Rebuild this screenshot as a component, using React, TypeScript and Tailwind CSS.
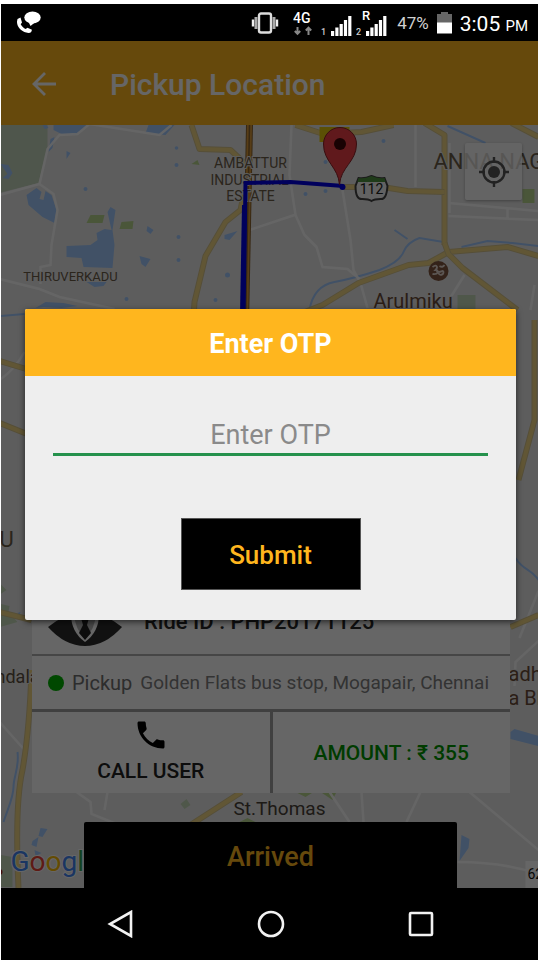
import { useState } from 'react';
import type { ReactNode } from 'react';

const ROBOTO = 'font-[Roboto,sans-serif]';

function Signal({ slot, roaming }: { slot: string; roaming?: boolean }) {
  return (
    <svg width="31" height="28" viewBox="0 0 31 28" fill="#fff" aria-hidden="true">
      <text x="0" y="26" fontSize="9" fontWeight="500" fill="#ccc">{slot}</text>
      {roaming && <text x="6" y="11" fontSize="13" fontWeight="500">R</text>}
      <rect x="10" y="22" width="3.2" height="5" />
      <rect x="14.3" y="18.500" width="3.2" height="8.500" />
      <rect x="18.600" y="15" width="3.2" height="12" />
      <rect x="22.900" y="11" width="3.2" height="16" />
      <rect x="27.200" y="7" width="3.2" height="20" />
    </svg>
  );
}

function StatusBar() {
  return (
    <header className="flex h-[37px] items-center bg-black pl-4 pr-2.5 text-white">
      <svg width="26" height="25" viewBox="0 0 26 25" fill="#fff" aria-hidden="true">
        <ellipse cx="15.500" cy="7.500" rx="8.200" ry="6" />
        <path d="M11 11l2.500 5 5-4z" />
        <path d="M.5 9l3-1.500 1.500 5-1.300 1.700c1.200 2.200 2.800 3.800 5 4.800l1.700-1.300 4.600 2-.8 2.400c-1 1-3 1.200-5 .5C4 21-.2 16.500 0 11.500z" />
      </svg>
      <div className="ml-auto flex items-center">
        <svg width="28" height="24" viewBox="0 0 28 24" aria-hidden="true">
          <rect x="8" y="2.500" width="12" height="19" rx="2" fill="#000" stroke="#ddd" strokeWidth="2.400" />
          <path d="M5 6v12M23 6v12" stroke="#aaa" strokeWidth="3" />
          <path d="M2 8.500v7M26 8.500v7" stroke="#eee" strokeWidth="2.400" />
        </svg>
        <svg className="ml-3.5" width="20" height="26" viewBox="0 0 20 26" aria-hidden="true">
          <text x="0" y="13" fontSize="14" fontWeight="500" fill="#fff">4G</text>
          <path d="M4.500 17v7M1.800 21l2.700 2.800 2.700-2.800M15.500 25v-7M12.800 20.500l2.700-2.800 2.700 2.800" stroke="#888" strokeWidth="2" fill="none" />
        </svg>
        <div className="ml-2 flex items-center gap-1">
          <Signal slot="1" />
          <Signal slot="2" roaming />
        </div>
        <span className="ml-2.5 text-[17px] leading-6 text-[#d0d0d0]">47%</span>
        <svg className="ml-2" width="15" height="22" viewBox="0 0 15 22" aria-hidden="true">
          <path d="M4 0h7v2h4v9H0V2h4z" fill="#666" />
          <rect y="10.500" width="15" height="11" fill="#fff" />
        </svg>
        <span className="ml-2 pt-1 text-[21px] leading-6">
          3:05 <span className="text-[15px]">PM</span>
        </span>
      </div>
    </header>
  );
}

function Road({ d, w = 5 }: { d: string; w?: number }) {
  return (
    <g fill="none" strokeLinejoin="round">
      <path d={d} stroke="#d6c48c" strokeWidth={w + 1} />
      <path d={d} stroke="#f3d886" strokeWidth={w - 1} />
    </g>
  );
}

function CityMap() {
  return (
    <svg
      className="absolute inset-0 h-full w-full"
      viewBox="1 125 538 763"
      preserveAspectRatio="xMidYMid slice"
      role="img"
      aria-label="Map of the pickup route"
    >
      <rect x="-200" y="0" width="1000" height="1200" fill="#e9e9e9" />
      <path d="M0 125h48v22l-9 36-39 10z" fill="#c6d6bd" />
      <g fill="#a2caff">
        <path d="M43 125h4l2 3-4 1zM54 125h34l-12 10-14-1-8-4zM149 125h26l-9 10-20-2zM51 139l4-2-2 11-4 4z" />
        <path d="M1 164l8 1 4 8-4 6-6-1 5-4zM67 151l4 2-4 6z" />
        <path d="M27 195l10-7 5 4-2 7 4 1 2-9 6 4 5 15-2 13-12-6-14-12z" />
        <path d="M108 212l3-5 5 3-3 20 2 15-2 23-29-1-2-9-15-1v-11l24-1 7-5-1-7 8-4 7 1z" />
        <path d="M87 282h20l-3 4-9 1zM140 256l11 3-5 8-4-3zM148 226l6 4-3 4-4-3zM225 235l13-4-8 9-5-1zM36 308l10-6 18 1 14 3-16 2-18-1z" />
        <circle cx="177" cy="148" r="1.800" /><circle cx="177" cy="165" r="2" /><circle cx="86" cy="189" r="2" />
        <circle cx="179" cy="237" r="2" /><circle cx="179" cy="260" r="2" /><circle cx="228" cy="275" r="2.500" />
        <circle cx="127" cy="299" r="2" /><circle cx="216" cy="300" r="2" /><circle cx="306" cy="194" r="2" />
        <circle cx="326" cy="162" r="2" /><circle cx="326" cy="191" r="2" /><circle cx="384" cy="141" r="2" />
        <path d="M511 732l4-3 24 7v10l-28-7zM462 835l8 4-1 9-9 13zM33 841l6-4-2 10-5-2zM41 828l7 1-5 8-4-1zM35 850l7 3-6 3zM18 613l3-1-1 4z" />
      </g>
      <g stroke="#a2caff" fill="none" strokeWidth="2">
        <path d="M0 316l25-2M310 310q4-24 25-28t45-12q20-8 24-18t16-14l24 4M395 230l13 9M448 126l38 17M462 247l26-6 25 2 26 3M516 558c8 13 15 10 23 22" />
        <path d="M18 752c2 15-4 25-4 35s-5 20-10 35" />
      </g>
      <g fill="#b9d690">
        <path d="M91 215h14l-2 8H87zM122 222l12-1-1 8h-13zM192 164l6-4 2 5zM296 792h18l-8 5zM321 792h16l-4 8zM240 822l8-4 8 4z" />
        <path d="M523 189h12v14h-12z" />
        <path d="M1 584l6 6-6 4zM1 604l9 2-1 6 9 10-17 5zM181 804l6-5 4 6-6 4zM458 295h18v14h-18zM1 855l12 2v30H1z" fill="#c6d9ba" />
      </g>
      <g stroke="#fff" strokeWidth="2.500" fill="none" opacity="0.9">
        <path d="M0 195l40-11 8-35 12-14 18-1 12-10 70 11 12-10M40 184l14 10 4 16-6 35-1 20-10 2v17M0 279l40 10 20 8 55 12" />
        <path d="M292 125l-2 50 6 40 9 20 12 12 6 20 25 2 12 10M416 125v62M343 190l8 50 3 30 7 13 7 25M250 230l45-15M449 203l90 8M449 216l90 4M450 143v70M508 208v10M465 275l-15 24M535 285l-4 25M0 380q15-10 25-28" />
        <path d="M520 638l19-47M540 640l-24 22-1 24M0 722l26 29M77 792l14 10 1 12 25 10M108 792l-3 18M330 792l20 30M362 792l2 30M421 792l-14 30M470 792l69 58M458 862q45 0 81 12" />
      </g>
      <Road d="M192 125l8 24 31 1 16 15" />
      <Road d="M244 195l-3 15-15 12-20 34-11 46-1 16" />
      <Road d="M296 125l28 9 38-2 32-7M425 123l20 12v110M512 123l27 14" />
      <Road d="M290 318l33-13 36-22 50-18 20-2 20-11 59-5 31 9" />
      <Road d="M445 243l4 11 14 14 55 42" />
      <Road d="M343 187h40l25 4 37 1" />
      <Road d="M0 361l30 9M0 423l30 12M0 612l32 8M511 627l28-12M535 320v100l-16 60" />
      <Road d="M32 670q-2 60-9 100-8 35-4 118M242 792l-65 42" />
      <path d="M250 125l-4 200" stroke="#8a6430" strokeWidth="7" />
      <path d="M250 125l-4 200" stroke="#d99a3a" strokeWidth="5" />
      <path d="M250 125l-4 200" stroke="#8a6430" strokeWidth="1.500" />

      <g fontSize="14" fill="#6b5c48" stroke="#e9e9e9" strokeWidth="2" paintOrder="stroke" textAnchor="middle">
        <text x="251" y="168">AMBATTUR</text>
        <text x="250" y="185">INDUSTRIAL</text>
        <text x="251" y="201">ESTATE</text>
        <text x="71" y="281" fontSize="13">THIRUVERKADU</text>
      </g>
      <path d="M244 315l2-132 45-1 53 4" fill="none" stroke="#0000e6" strokeWidth="4" />
      <path d="M243 315l2-110" stroke="#0000e6" strokeWidth="5" />
      <circle cx="343" cy="187" r="3" fill="#0000e6" />

      <g fill="#6b4c38" stroke="#e9e9e9" strokeWidth="2" paintOrder="stroke">
        <text x="434" y="169" fontSize="22" fill="#6b5c48">ANNA NAGAR</text>
        <text x="374" y="308" fontSize="20">Arulmiku</text>
        <text x="-4" y="683" fontSize="18" fill="#5c5040">ndala</text>
        <text x="0" y="547" fontSize="22" fill="#6b5c48">U</text>
        <text x="509" y="681" fontSize="20">adha</text>
        <text x="509" y="705" fontSize="20">a Bha</text>
        <text x="234" y="815" fontSize="19" fill="#4a4238">St.Thomas</text>
      </g>
      <circle cx="439" cy="271" r="10" fill="#80563f" />
      <path d="M433 267c4-3 6 0 3 3 4 0 3 5-3 4M437 271c4 3 6-2 7 1 0 3-4 4-5 1M440 266q3 2 5-1" fill="none" stroke="#e5d8d0" strokeWidth="1.800" />

      <path d="M359 178q6 1 13-2 7 3 13 2l3 8q-1 14-7 13-6 0-9 2-3-2-9-2-7 1-7-13z" fill="#f5f5f5" stroke="#444" strokeWidth="2" />
      <path d="M359 178q6 1 13-2 7 3 13 2l1 4h-28z" fill="#4f9440" />
      <text x="372" y="194" fontSize="14" fill="#222" textAnchor="middle">112</text>
      <path d="M320 127h30v15h-30z" fill="#e3c80d" />
      <path d="M340 185c-1-18-16-23-16-41a16.500 16.500 0 0 1 33 0c0 18-16 23-17 41z" fill="#ef4046" stroke="#8a2228" />
      <circle cx="340.500" cy="144" r="6" fill="#3c0508" />
      <path d="M526 861h13v27h-13z" fill="#fff" />
      <text x="528" y="879" fontSize="14" fill="#111">625</text>
      <circle cx="0" cy="872" r="3" fill="#a62020" />
      <g fontSize="28" stroke="#fff" strokeWidth="2" paintOrder="stroke">
        <text x="11" y="871">
          <tspan fill="#4285f4">G</tspan><tspan fill="#ea4335">o</tspan><tspan fill="#fbbc05">o</tspan>
          <tspan fill="#4285f4">g</tspan><tspan fill="#34a853">l</tspan><tspan fill="#ea4335">e</tspan>
        </text>
      </g>
    </svg>
  );
}

function DriverAvatar() {
  return (
    <svg width="74" height="74" viewBox="0 0 74 74" aria-hidden="true">
      <path d="M0 55Q16 42 37 38 58 42 74 55 57 74 37 74 17 74 0 55z" fill="#2c2c2c" />
      <path d="M23 42q0 18 14 28 14-10 14-28z" fill="#fff" />
      <path d="M26 42q1 15 11 25 10-10 11-25z" fill="#b5b5b5" />
      <path d="M33 46h8l-2 7 4 8-6 7-6-7 4-8z" fill="#222" />
    </svg>
  );
}

function RideCard() {
  return (
    <section className="relative ml-[31px] mr-7 bg-white">
      <div className="flex h-[100px] items-end gap-[22px] px-4 pb-2">
        <DriverAvatar />
        <p className="pb-3 text-[22px] leading-6 font-medium text-[#2a2a2a]">Ride ID : PHP20171125</p>
      </div>
      <div className="flex h-[55px] items-center border-t-2 border-[#b0b0b0] pl-4 leading-6 whitespace-nowrap text-[#808080]">
        <span className="mr-2 size-4 shrink-0 rounded-full bg-[#00b400]" />
        <span className="mr-2 text-[20px] text-[#707070]">Pickup</span>
        <span className="text-[19px]">Golden Flats bus stop, Mogapair, Chennai</span>
      </div>
      <div className="flex h-[84px] border-t-3 border-[#a0a0a0]">
        <button className="flex flex-1 flex-col items-center justify-center gap-1 border-r-3 border-[#a0a0a0] pb-1 text-[21px] leading-7 font-medium text-[#222]">
          <svg width="36" height="36" viewBox="0 0 24 24" fill="#000" aria-hidden="true">
            <path d="M6.620 10.790c1.440 2.830 3.760 5.140 6.590 6.590l2.200-2.200c.27-.27.670-.36 1.020-.24 1.120.37 2.330.57 3.570.57.550 0 1 .45 1 1V20c0 .55-.45 1-1 1-9.390 0-17-7.610-17-17 0-.55.450-1 1-1h3.500c.550 0 1 .45 1 1 0 1.250.2 2.450.57 3.570.110.350.030.740-.250 1.020z" />
          </svg>
          CALL USER
        </button>
        <p className="flex flex-1 items-center justify-center text-[21px] leading-7 font-medium text-[#009600]">
          AMOUNT : ₹ 355
        </p>
      </div>
    </section>
  );
}

function OtpDialog() {
  const [otp, setOtp] = useState('');
  return (
    <div className="absolute inset-0 flex items-center justify-center bg-black/60 pr-[22px] pl-6">
      <form
        role="dialog"
        aria-labelledby="otp-title"
        className="w-full overflow-hidden rounded-xs bg-[#eee] shadow-[0_2px_6px_rgba(0,0,0,0.6)]"
        onSubmit={(event) => event.preventDefault()}
      >
        <h2 id="otp-title" className="bg-[#ffb61e] pt-[19px] pb-4 text-center text-[27px] leading-8 font-bold text-white">
          Enter OTP
        </h2>
        <div className="flex flex-col items-center px-7 pt-9 pb-[30px]">
          <input
            aria-label="Enter OTP"
            placeholder="Enter OTP"
            value={otp}
            onChange={(event) => setOtp(event.target.value)}
            className="h-11 w-full border-b-3 border-[#25914c] bg-transparent pt-1 text-center text-[27px] text-[#333] outline-none placeholder:text-[#8a8a8a]"
          />
          <button className="mt-[62px] h-[72px] w-[180px] border border-[#555] bg-black pt-0.5 text-[26px] leading-8 font-medium text-[#ffb61e]">
            Submit
          </button>
        </div>
      </form>
    </div>
  );
}

function NavButton({ label, children }: { label: string; children: ReactNode }) {
  return (
    <button aria-label={label} className="flex size-12 items-center justify-center">
      <svg width="28" height="28" viewBox="0 0 28 28" fill="none" stroke="#f2f2f2" strokeWidth="2.600" aria-hidden="true">
        {children}
      </svg>
    </button>
  );
}

export default function App() {
  return (
    <div className={`min-h-screen bg-white pt-1 pr-0.5 pl-px ${ROBOTO}`}>
      <div className="flex min-h-[calc(100vh-4px)] flex-col">
        <StatusBar />
        <main className="relative flex flex-1 flex-col">
          <div className="flex h-[84px] items-center bg-[#ffb71f] pt-1 pl-7 text-white">
            <button aria-label="Back">
              <svg width="30" height="30" viewBox="0 0 30 30" fill="none" stroke="#fff" strokeWidth="2.800" aria-hidden="true">
                <path d="M27 14H5M16 3L5 14l11 11" />
              </svg>
            </button>
            <h1 className="ml-[51px] text-[30px] leading-9 font-medium">Pickup Location</h1>
          </div>
          <div className="relative flex flex-1 flex-col justify-end overflow-hidden">
            <CityMap />
            <button
              aria-label="My location"
              className="absolute top-[18px] right-4 flex size-[57px] items-center justify-center rounded-xs bg-white/75 shadow-[0_1px_3px_rgba(0,0,0,0.3)]"
            >
              <svg width="32" height="32" viewBox="0 0 32 32" fill="none" stroke="#555" strokeWidth="2.400" aria-hidden="true">
                <circle cx="16" cy="16" r="10.500" />
                <circle cx="16" cy="16" r="6" fill="#555" stroke="none" />
                <path d="M16 1v6M16 25v6M1 16h6M25 16h6" />
              </svg>
            </button>
            <RideCard />
            <button className="relative mr-[81px] ml-[83px] mt-[29px] h-[66px] rounded-t-xs bg-black pt-1 text-[27px] leading-8 font-medium text-[#ffb71f]">
              Arrived
            </button>
          </div>
          <OtpDialog />
        </main>
        <nav className="flex h-[72px] items-center justify-center gap-[102px] bg-black pl-0.5">
          <NavButton label="Navigate back">
            <path d="M24 2v24L3 14z" />
          </NavButton>
          <NavButton label="Home">
            <circle cx="14" cy="14" r="12" />
          </NavButton>
          <NavButton label="Recent apps">
            <rect x="3" y="3" width="22" height="22" rx="1" />
          </NavButton>
        </nav>
      </div>
    </div>
  );
}
